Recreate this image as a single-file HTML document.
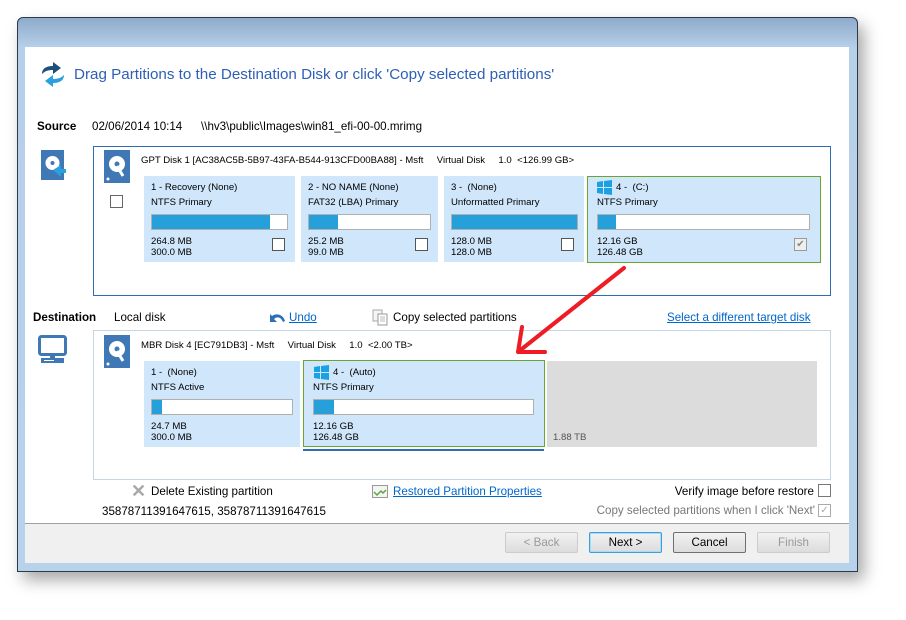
<!DOCTYPE html>
<html><head><style>
*{margin:0;padding:0;box-sizing:border-box}
body{width:906px;height:620px;background:#fff;position:relative;overflow:hidden;font-family:"Liberation Sans",sans-serif;font-size:11.6px;color:#000}
.a{position:absolute;white-space:nowrap}
.p{font-size:9.6px}
.frame{position:absolute;left:17px;top:17px;width:841px;height:555px;border:1px solid #2a3a4a;border-radius:6px 6px 0 0;background:linear-gradient(#8eabcb,#b7d0ea 30px,#b9d2eb);box-shadow:6px 8px 16px rgba(0,0,0,.35)}
.content{position:absolute;left:25px;top:47px;width:824px;height:476px;background:#fff}
.btnbar{position:absolute;left:25px;top:523px;width:824px;height:40px;background:#f0f0f0;border-top:1px solid #a0a0a0}
.box{position:absolute;border:1px solid #2e6db4;background:#fff}
.part{position:absolute;background:#d0e6fa}
.bar{position:absolute;height:16px;background:#fff;border:1px solid #b0b0b0}
.bar i{position:absolute;left:0;top:0;bottom:0;background:#26a0da}
.cb{position:absolute;width:13px;height:13px;border:1px solid #555;background:#fff}
.lnk{color:#0066cc;text-decoration:underline}
.btn{position:absolute;top:532px;width:73px;height:21px;border:1px solid #acacac;border-radius:2px;background:linear-gradient(#f2f2f2,#dcdcdc);text-align:center;line-height:19px;font-size:11.6px}
</style></head><body>
<div class="frame"></div>
<div class="content"></div>
<div class="btnbar"></div>

<svg class="a" style="left:39px;top:60px" width="28" height="30" viewBox="0 0 28 30">
<path d="M3 14 C3 8 8 6 14 6 L14 2 L22 8 L14 14 L14 10 C9 10 6 11 3 14Z" fill="#1e4f7c"/>
<path d="M25 15 C25 21 20 23 14 23 L14 27 L6 21 L14 15 L14 19 C19 19 22 18 25 15Z" fill="#2aa0dd"/>
</svg>
<div class="a" style="left:74px;top:66px;font-size:15.2px;color:#2e5fb5">Drag Partitions to the Destination Disk or click 'Copy selected partitions'</div>

<div class="a" style="left:37px;top:120px;font-weight:bold">Source</div>
<div class="a" style="left:92px;top:120px">02/06/2014 10:14</div>
<div class="a" style="left:201px;top:120px">\\hv3\public\Images\win81_efi-00-00.mrimg</div>

<svg class="a" style="left:41px;top:150px" width="26" height="32" viewBox="0 0 26 32"><rect x="0" y="0" width="23" height="30" fill="#3f78b4"/><circle cx="11.5" cy="13" r="7" fill="#fff"/><circle cx="11.5" cy="13" r="2" fill="#3f78b4"/><path d="M12 20 l8-5 l0 4 l5 0 l0 4 l-5 0 l0 4z" fill="#2aa0dd"/></svg>

<div class="box" style="left:93px;top:146px;width:738px;height:150px"></div>
<svg class="a" style="left:104px;top:150px" width="26" height="33" viewBox="0 0 26 33"><rect width="26" height="33" fill="#3f78b4"/><circle cx="13" cy="14" r="8" fill="#fff"/><circle cx="13" cy="14" r="2.5" fill="#3f78b4"/><path d="M13 16 L19 26" stroke="#fff" stroke-width="3"/><circle cx="4" cy="29" r="1.5" fill="#fff"/></svg>
<div class="a p" style="left:141px;top:155px">GPT Disk 1 [AC38AC5B-5B97-43FA-B544-913CFD00BA88] - Msft &nbsp;&nbsp;&nbsp; Virtual Disk &nbsp;&nbsp;&nbsp; 1.0 &nbsp;&lt;126.99 GB&gt;</div>
<div class="cb" style="left:110px;top:195px;border-color:#666"></div>

<div class="part" style="left:144px;top:176px;width:151px;height:86px"></div>
<div class="a p" style="left:151px;top:182px">1 - Recovery (None)</div>
<div class="a p" style="left:151px;top:197px">NTFS Primary</div>
<div class="bar" style="left:151px;top:214px;width:137px"><i style="width:118px"></i></div>
<div class="a p" style="left:151px;top:236px;line-height:11px">264.8 MB<br>300.0 MB</div>
<div class="cb" style="left:272px;top:238px"></div>

<div class="part" style="left:301px;top:176px;width:137px;height:86px"></div>
<div class="a p" style="left:308px;top:182px">2 - NO NAME (None)</div>
<div class="a p" style="left:308px;top:197px">FAT32 (LBA) Primary</div>
<div class="bar" style="left:308px;top:214px;width:123px"><i style="width:29px"></i></div>
<div class="a p" style="left:308px;top:236px;line-height:11px">25.2 MB<br>99.0 MB</div>
<div class="cb" style="left:415px;top:238px"></div>

<div class="part" style="left:444px;top:176px;width:140px;height:86px"></div>
<div class="a p" style="left:451px;top:182px">3 - &nbsp;(None)</div>
<div class="a p" style="left:451px;top:197px">Unformatted Primary</div>
<div class="bar" style="left:451px;top:214px;width:127px"><i style="width:125px"></i></div>
<div class="a p" style="left:451px;top:236px;line-height:11px">128.0 MB<br>128.0 MB</div>
<div class="cb" style="left:561px;top:238px"></div>

<div class="part" style="left:587px;top:176px;width:234px;height:87px;border:1px solid #6aa52d"></div>
<svg class="a" style="left:597px;top:180px" width="15" height="15" viewBox="0 0 15 15" fill="#1ba1e2"><path d="M0 2 L6 1 L6 7 L0 7Z M7 1 L15 0 L15 7 L7 7Z M0 8 L6 8 L6 14 L0 13Z M7 8 L15 8 L15 15 L7 14Z"/></svg>
<div class="a p" style="left:616px;top:182px">4 - &nbsp;(C:)</div>
<div class="a p" style="left:597px;top:197px">NTFS Primary</div>
<div class="bar" style="left:597px;top:214px;width:213px"><i style="width:18px"></i></div>
<div class="a p" style="left:597px;top:236px;line-height:11px">12.16 GB<br>126.48 GB</div>
<div class="cb" style="left:794px;top:238px;border-color:#999;background:#eee;color:#888;font-size:10px;line-height:11px;text-align:center">✔</div>

<div class="a" style="left:33px;top:311px;font-weight:bold">Destination</div>
<div class="a" style="left:114px;top:311px">Local disk</div>
<svg class="a" style="left:268px;top:312px" width="18" height="13" viewBox="0 0 18 13"><path d="M2 2 L2 10 L9 10 L6 7 C9 4 13 5 15 10 L17 9 C15 2 8 1 4 4Z" fill="#2c6fb8"/></svg>
<div class="a lnk" style="left:289px;top:311px">Undo</div>
<svg class="a" style="left:372px;top:309px" width="17" height="17" viewBox="0 0 17 17"><rect x="1" y="1" width="9" height="11" fill="#f4f4f4" stroke="#aaa"/><rect x="6" y="5" width="9" height="11" fill="#fff" stroke="#999"/><path d="M8 8h5M8 10h5M8 12h5" stroke="#bbb"/></svg>
<div class="a" style="left:393px;top:311px">Copy selected partitions</div>
<div class="a lnk" style="left:667px;top:311px">Select a different target disk</div>

<svg class="a" style="left:38px;top:335px" width="30" height="29" viewBox="0 0 30 29"><rect x="1.5" y="1.5" width="26" height="18" rx="2" fill="#fff" stroke="#3f78b4" stroke-width="3"/><rect x="12" y="20" width="5" height="3" fill="#3f78b4"/><rect x="3" y="23" width="23" height="5" fill="#3f78b4"/><path d="M6 25.5h10" stroke="#fff"/></svg>

<div class="box" style="left:93px;top:330px;width:738px;height:150px;border-color:#c5d5e5"></div>
<svg class="a" style="left:104px;top:335px" width="26" height="33" viewBox="0 0 26 33"><rect width="26" height="33" fill="#3f78b4"/><circle cx="13" cy="14" r="8" fill="#fff"/><circle cx="13" cy="14" r="2.5" fill="#3f78b4"/><path d="M13 16 L19 26" stroke="#fff" stroke-width="3"/><circle cx="4" cy="29" r="1.5" fill="#fff"/></svg>
<div class="a p" style="left:141px;top:340px">MBR Disk 4 [EC791DB3] - Msft &nbsp;&nbsp;&nbsp; Virtual Disk &nbsp;&nbsp;&nbsp; 1.0 &nbsp;&lt;2.00 TB&gt;</div>

<div class="part" style="left:144px;top:361px;width:156px;height:86px"></div>
<div class="a p" style="left:151px;top:367px">1 - &nbsp;(None)</div>
<div class="a p" style="left:151px;top:382px">NTFS Active</div>
<div class="bar" style="left:151px;top:399px;width:142px"><i style="width:10px"></i></div>
<div class="a p" style="left:151px;top:421px;line-height:11px">24.7 MB<br>300.0 MB</div>

<div class="part" style="left:303px;top:360px;width:242px;height:87px;border:1px solid #6aa52d"></div>
<div class="a" style="left:303px;top:449px;width:241px;height:2px;background:#2c6fb8"></div>
<svg class="a" style="left:314px;top:365px" width="15" height="15" viewBox="0 0 15 15" fill="#1ba1e2"><path d="M0 2 L6 1 L6 7 L0 7Z M7 1 L15 0 L15 7 L7 7Z M0 8 L6 8 L6 14 L0 13Z M7 8 L15 8 L15 15 L7 14Z"/></svg>
<div class="a p" style="left:333px;top:367px">4 - &nbsp;(Auto)</div>
<div class="a p" style="left:313px;top:382px">NTFS Primary</div>
<div class="bar" style="left:313px;top:399px;width:221px"><i style="width:20px"></i></div>
<div class="a p" style="left:313px;top:421px;line-height:11px">12.16 GB<br>126.48 GB</div>

<div class="a" style="left:547px;top:361px;width:270px;height:86px;background:#dcdcdc"></div>
<div class="a p" style="left:553px;top:432px;color:#555">1.88 TB</div>

<div class="a" style="left:131px;top:483px;font-size:18px;line-height:16px;color:#a8a8a8;font-weight:bold">✕</div>
<div class="a" style="left:151px;top:485px">Delete Existing partition</div>
<svg class="a" style="left:372px;top:485px" width="16" height="13" viewBox="0 0 16 13"><rect x="0.5" y="0.5" width="15" height="12" fill="#f4f4f4" stroke="#999"/><path d="M2 7 L5 10 L9 6 L11 8 L14 5" stroke="#5aa83a" stroke-width="1.5" fill="none"/></svg>
<div class="a lnk" style="left:393px;top:485px">Restored Partition Properties</div>
<div class="a" style="right:92px;top:485px">Verify image before restore</div>
<div class="cb" style="left:818px;top:484px;border-color:#777"></div>
<div class="a" style="right:91px;top:504px;color:#777">Copy selected partitions when I click 'Next'</div>
<div class="cb" style="left:818px;top:504px;border-color:#aaa;color:#aaa;font-size:10px;line-height:11px;text-align:center">✓</div>
<div class="a" style="left:102px;top:505px">35878711391647615, 35878711391647615</div>

<div class="btn" style="left:505px;color:#999;border-color:#ccc">&lt; Back</div>
<div class="btn" style="left:589px;border-color:#3c9fd8;box-shadow:inset 0 0 0 1px #a8dbf5">Next &gt;</div>
<div class="btn" style="left:673px;border-color:#707070">Cancel</div>
<div class="btn" style="left:757px;color:#999;border-color:#ccc">Finish</div>

<svg class="a" style="left:0;top:0" width="906" height="620"><path d="M624 268 L518 352 M522 327 L518 352 L545 352" stroke="#ee1c24" stroke-width="4" fill="none" stroke-linecap="round" stroke-linejoin="round"/></svg>
</body></html>
